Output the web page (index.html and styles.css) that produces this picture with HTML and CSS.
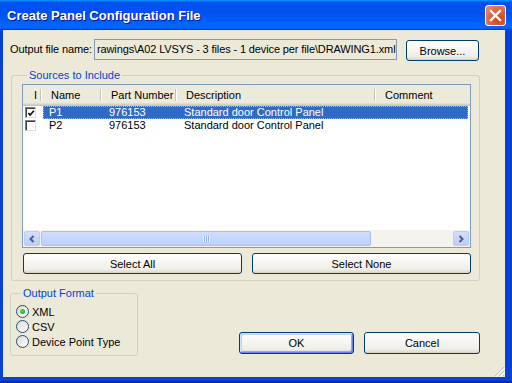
FILE: index.html
```html
<!DOCTYPE html>
<html lang="en">
<head>
    <meta charset="UTF-8">
    <title>Create Panel Configuration File</title>
    <link rel="stylesheet" href="styles.css">
</head>
<body>
    <div class="window">
        <div class="titlebar">
            <span class="title">Create Panel Configuration File</span>
            <button class="close">
                <svg width="13" height="13" viewBox="0 0 13 13"><path d="M2 2 L11 11 M11 2 L2 11" stroke="#fff" stroke-width="2.4" stroke-linecap="square"/></svg>
            </button>
        </div>
        <div class="dialog">
            <div class="file-row">
                <span class="file-label">Output file name:</span>
                <div class="file-field">rawings\A02 LVSYS - 3 files - 1 device per file\DRAWING1.xml</div>
                <button class="btn browse">Browse...</button>
            </div>

            <fieldset class="group sources">
                <legend>Sources to Include</legend>
                <div class="list">
                    <div class="list-head">
                        <div class="hcell c0">I</div>
                        <div class="hcell c1">Name</div>
                        <div class="hcell c2">Part Number</div>
                        <div class="hcell c3">Description</div>
                        <div class="hcell c4">Comment</div>
                    </div>
                    <div class="list-rows">
                        <div class="row">
                            <div class="cell c0"><span class="check on"><svg width="9" height="9" viewBox="0 0 9 9"><path d="M1.5 4 L3.5 6.3 L7.8 1.5" fill="none" stroke="#000" stroke-width="1.7"/></svg></span></div>
                            <div class="sel">
                                <div class="cell c1">P1</div>
                                <div class="cell c2">976153</div>
                                <div class="cell c3">Standard door Control Panel</div>
                            </div>
                        </div>
                        <div class="row">
                            <div class="cell c0"><span class="check"></span></div>
                            <div class="unsel">
                                <div class="cell c1">P2</div>
                                <div class="cell c2">976153</div>
                                <div class="cell c3">Standard door Control Panel</div>
                            </div>
                        </div>
                    </div>
                    <div class="hscroll">
                        <div class="sbtn"><svg width="8" height="8" viewBox="0 0 8 8"><path d="M5.5 1 L2.5 4 L5.5 7" fill="none" stroke="#4D6185" stroke-width="2"/></svg></div>
                        <div class="thumb"><span class="grip"></span></div>
                        <div class="track"></div>
                        <div class="sbtn"><svg width="8" height="8" viewBox="0 0 8 8"><path d="M2.5 1 L5.5 4 L2.5 7" fill="none" stroke="#4D6185" stroke-width="2"/></svg></div>
                    </div>
                </div>
                <div class="select-row">
                    <button class="btn wide">Select All</button>
                    <button class="btn wide">Select None</button>
                </div>
            </fieldset>

            <div class="bottom-row">
                <fieldset class="group format">
                    <legend>Output Format</legend>
                    <label class="radio"><span class="dot on"></span>XML</label>
                    <label class="radio"><span class="dot"></span>CSV</label>
                    <label class="radio"><span class="dot"></span>Device Point Type</label>
                </fieldset>
                <div class="actions">
                    <button class="btn action default">OK</button>
                    <button class="btn action">Cancel</button>
                </div>
            </div>

            <svg class="grip-corner" width="12" height="12" viewBox="0 0 12 12">
                <path d="M11 2 L2 11 M11 6 L6 11 M11 10 L10 11" stroke="#C1BDAE" stroke-width="1"/>
                <path d="M12 3 L3 12 M12 7 L7 12" stroke="#fff" stroke-width="1"/>
            </svg>
        </div>
    </div>
</body>
</html>
```

FILE: styles.css
```css
body { margin: 0; font-family: "Liberation Sans", Arial, sans-serif; font-size: 11px; color: #000; }
.window { width: 512px; height: 383px; display: flex; flex-direction: column; background: #0A2AA8; box-sizing: border-box; padding-bottom: 2px; }

.titlebar { height: 30px; flex: none; display: flex; align-items: center; justify-content: space-between; padding: 0 6px 0 7px;
    background: linear-gradient(180deg, #0997ff, #0053ee 8%, #0050ee 40%, #0066ff 88%, #0066ff 93%, #005bff 95%, #003dd7 96%, #003dd7); }
.title { color: #fff; font-weight: bold; font-size: 13px; text-shadow: 1px 1px #0F1089; margin-top: 1px; }
.close { width: 21px; height: 21px; padding: 0; border: 1px solid #fff; border-radius: 3px; display: flex; align-items: center; justify-content: center;
    background: radial-gradient(circle at 70% 70%, #CC4418, #E36A48 60%, #F0957A); margin-top: 1px; }

.dialog { flex: 1; position: relative; background: #ECE9D8; border-left: 3px solid #0842D4; border-right: 7px solid #0842D4; border-bottom: 4px solid #0842D4; }

.file-row { display: flex; align-items: flex-start; margin-top: 9px; padding-left: 7px; }
.file-label { width: 84px; line-height: 21px; letter-spacing: -0.1px; }
.file-field { width: 303px; height: 21px; box-sizing: border-box; border: 1px solid #7F9DB9; padding-left: 2px; line-height: 19px; white-space: nowrap; overflow: hidden; letter-spacing: -0.12px; }
.browse { margin-left: 9px; width: 73px; height: 21px; margin-top: 1px; }

.btn { font-family: inherit; font-size: 11px; color: #000; padding: 0; box-sizing: border-box; border: 1px solid #003C74; border-radius: 3px;
    background: linear-gradient(180deg, #fff 0%, #F8F7F3 35%, #EFEEE8 80%, #E3E0D6 92%, #D6D0C5 100%); }
.default { box-shadow: inset 1px 1px 0 #CEE7FF, inset -1px -1px 0 #6982EE, inset 2px 2px 0 #BCD4F6, inset -2px -2px 0 #89ADE4; }

.group { border: 1px solid #D0D0BF; border-radius: 3px; margin: 0; min-width: 0; box-sizing: border-box; }
.group legend { color: #0046D5; padding: 0 2px; margin-left: 5px; line-height: 13px; }

.sources { width: 469px; margin: 8px 0 0 8px; padding: 2px 0 6px 10px; }

.list { width: 449px; height: 164px; box-sizing: border-box; border: 1px solid #7F9DB9; background: #fff; display: flex; flex-direction: column; }
.list-head { height: 21px; flex: none; display: flex; background: #EBEADB; box-shadow: inset 0 -1px #CBC7B8, inset 0 -2px #D6D2C2, inset 0 -3px #E2DECD; }
.hcell { position: relative; box-sizing: border-box; padding-left: 10px; line-height: 20px; white-space: nowrap; }
.hcell::after { content: ""; position: absolute; right: 0; top: 4px; bottom: 5px; width: 1px; background: #C7C5B2; box-shadow: 1px 0 #fff; }
.hcell.c0 { width: 18px; padding-left: 11px; }
.hcell.c1 { width: 60px; }
.hcell.c2 { width: 75px; }
.hcell.c3 { width: 199px; }
.hcell.c4 { flex: 1; }
.hcell.c4::after { display: none; }

.list-rows { flex: 1; }
.row { display: flex; height: 13px; line-height: 13px; }
.cell { white-space: nowrap; }
.cell.c0 { width: 20px; padding-left: 2px; box-sizing: border-box; }
.sel, .unsel { display: flex; width: 425px; }
.sel { background: #316AC5; color: #fff; outline: 1px dotted #E8B048; outline-offset: -1px; }
.cell.c1 { width: 58px; padding-left: 6px; box-sizing: border-box; }
.cell.c2 { width: 75px; padding-left: 8px; box-sizing: border-box; }
.cell.c3 { padding-left: 8px; }
.check { display: flex; align-items: center; justify-content: center; width: 11px; height: 11px; box-sizing: border-box; margin-top: 1px;
    border: 1px solid; border-color: #808080 #E0DED4 #E0DED4 #808080; background: #fff; box-shadow: inset 1px 1px #404040; }
.check svg { margin: 1px 0 0 1px; }

.hscroll { height: 17px; flex: none; display: flex; align-items: center; gap: 1px; background: #F4F3EE; padding: 0 1px; }
.sbtn { width: 16px; height: 15px; box-sizing: border-box; border: 1px solid #B9CCF8; border-radius: 2px; display: flex; align-items: center; justify-content: center;
    background: linear-gradient(180deg, #D2DEFD, #BCCDF9); }
.thumb { width: 330px; height: 15px; box-sizing: border-box; border: 1px solid #A8BEF5; border-radius: 2px; display: flex; align-items: center; justify-content: center;
    background: linear-gradient(180deg, #CFDDFD, #BDD0FB); }
.grip { width: 7px; height: 6px; background: repeating-linear-gradient(90deg, #EEF4FE 0 1px, #8CB0F8 1px 2px); }
.track { flex: 1; }

.select-row { display: flex; gap: 10px; margin-top: 5px; padding-left: 1px; }
.wide { width: 219px; height: 21px; }

.bottom-row { display: flex; align-items: flex-end; margin-top: 6px; }
.format { width: 128px; margin-left: 7px; padding: 4px 0 6px 5px; }
.radio { display: flex; align-items: center; height: 15px; gap: 3px; }
.dot { width: 13px; height: 13px; box-sizing: border-box; border: 1px solid #1C5180; border-radius: 50%; display: flex; align-items: center; justify-content: center;
    background: linear-gradient(135deg, #DCD9CF, #fff); }
.dot.on::after { content: ""; width: 5px; height: 5px; border-radius: 50%; background: radial-gradient(circle at 35% 35%, #5CD85A, #109E10); }

.actions { display: flex; gap: 10px; margin-left: 101px; margin-bottom: 2px; }
.action { width: 115px; height: 22px; }
.action + .action { width: 116px; }

.grip-corner { position: absolute; right: 0; bottom: 0; }
```
